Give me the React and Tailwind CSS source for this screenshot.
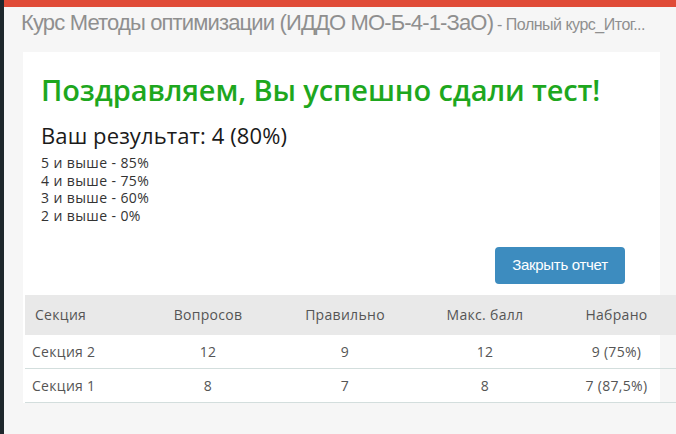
export default function App() {
    const rows = [
        { name: "Секция 2", total: 12, right: 9, max: 12, got: "9 (75%)" },
        { name: "Секция 1", total: 8, right: 7, max: 8, got: "7 (87,5%)" },
    ];

    return (
        <div className="flex w-[676px] h-[434px] overflow-hidden bg-[#f6f6f6]">
            <div className="w-[4px] shrink-0 bg-[#1e272c]" />

            <div className="flex-1 flex flex-col">
                <div className="h-[7px] bg-[#e04b37]" />

                <div className="pl-[17px] pt-[2px] h-[45px] whitespace-nowrap text-[#8f8f8f] font-['Liberation_Sans',sans-serif]">
                    <span className="text-[22px] leading-[28px] tracking-[-0.85px]">Курс Методы оптимизации (ИДДО МО-Б-4-1-ЗаО)</span>
                    <span className="text-[16px] tracking-[-0.5px]"> - Полный курс_Итог...</span>
                </div>

                <div className="ml-[19px] w-[637px] bg-white pt-[20px]">
                    <div className="pl-[18px]">
                        <h1 className="text-[29px] leading-[36px] font-semibold text-[#1ea71e] font-['Open_Sans',sans-serif] tracking-[-0.1px]">
                            Поздравляем, Вы успешно сдали тест!
                        </h1>
                        <p className="mt-[14px] text-[22px] leading-[26px] text-[#1a1a1a] font-['Open_Sans',sans-serif] tracking-[0.1px]">
                            Ваш результат: 4 (80%)
                        </p>
                        <div className="mt-[6px] text-[14px] leading-[17.7px] text-[#333] font-['Open_Sans',sans-serif] tracking-[0.4px]">
                            <p>5 и выше - 85%</p>
                            <p>4 и выше - 75%</p>
                            <p>3 и выше - 60%</p>
                            <p>2 и выше - 0%</p>
                        </div>
                    </div>

                    <div className="flex justify-end pr-[35px] mt-[22px] mb-[11px]">
                        <button className="w-[130px] h-[37px] rounded-[4px] bg-[#3d8cbf] text-white text-[15px] font-['Liberation_Sans',sans-serif] tracking-[-0.3px]">
                            Закрыть отчет
                        </button>
                    </div>

                    <table className="ml-[2px] w-[651px] border-collapse text-[14px] tracking-[0.3px] text-[#555] font-['Open_Sans',sans-serif]">
                        <thead>
                            <tr className="bg-[#e9e9e9] h-[40px]">
                                <th className="w-[114px] text-left font-normal pl-[10px]">Секция</th>
                                <th className="w-[138px] font-normal">Вопросов</th>
                                <th className="w-[136px] font-normal">Правильно</th>
                                <th className="w-[144px] font-normal">Макс. балл</th>
                                <th className="font-normal">Набрано</th>
                            </tr>
                        </thead>
                        <tbody>
                            {rows.map((r) => (
                                <tr key={r.name} className="h-[34px] border-b border-[#d3dedd]">
                                    <td className="pl-[7px]">{r.name}</td>
                                    <td className="text-center">{r.total}</td>
                                    <td className="text-center">{r.right}</td>
                                    <td className="text-center">{r.max}</td>
                                    <td className="text-center">{r.got}</td>
                                </tr>
                            ))}
                        </tbody>
                    </table>
                </div>
            </div>
        </div>
    );
}
